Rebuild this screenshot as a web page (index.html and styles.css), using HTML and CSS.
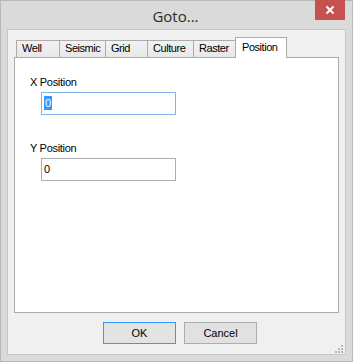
FILE: index.html
```html
<!DOCTYPE html>
<html>
<head>
<meta charset="utf-8">
<link rel="stylesheet" href="styles.css">
</head>
<body>
<div class="window">
  <div class="titlebar">
    <div class="title">Goto...</div>
    <div class="close">
      <svg width="10" height="10" viewBox="0 0 10 10"><path d="M1.5 1.5 L8.5 8.5 M8.5 1.5 L1.5 8.5" stroke="#ffffff" stroke-width="2"/></svg>
    </div>
  </div>
  <div class="client">
    <div class="tabs">
      <div class="tab tab-well">Well</div>
      <div class="tab tab-seismic">Seismic</div>
      <div class="tab tab-grid">Grid</div>
      <div class="tab tab-culture">Culture</div>
      <div class="tab tab-raster">Raster</div>
      <div class="tab tab-position active">Position</div>
    </div>
    <div class="panel">
      <div class="label">X Position</div>
      <div class="input focus"><span class="sel">0</span></div>
      <div class="label second">Y Position</div>
      <div class="input"><span>0</span></div>
    </div>
    <div class="buttons">
      <div class="btn default">OK</div>
      <div class="btn">Cancel</div>
    </div>
    <svg class="grip" width="10" height="10" viewBox="0 0 10 10">
      <rect x="7" y="1" width="2" height="2" fill="#b8b8b8"/>
      <rect x="4" y="4" width="2" height="2" fill="#b8b8b8"/>
      <rect x="7" y="4" width="2" height="2" fill="#b8b8b8"/>
      <rect x="1" y="7" width="2" height="2" fill="#b8b8b8"/>
      <rect x="4" y="7" width="2" height="2" fill="#b8b8b8"/>
      <rect x="7" y="7" width="2" height="2" fill="#b8b8b8"/>
    </svg>
  </div>
</div>
</body>
</html>
```
FILE: styles.css
```css
html, body {
  margin: 0;
  padding: 0;
  background: #ffffff;
}
.window {
  width: 353px;
  height: 362px;
  box-sizing: border-box;
  background: #dadada;
  border: 1px solid #b9b9b9;
  padding: 0 7px 7px 7px;
  display: flex;
  flex-direction: column;
  font-family: "Liberation Sans", Arial, sans-serif;
}
.titlebar {
  height: 29px;
  display: grid;
  grid-template-columns: 1fr auto 1fr;
  align-items: start;
}
.title {
  grid-column: 2;
  font-family: "Open Sans", "Noto Sans", sans-serif;
  font-size: 15px;
  line-height: 20px;
  padding-top: 5px;
  color: #2b2b2b;
  transform: translateX(-1px);
}
.close {
  grid-column: 3;
  justify-self: end;
  width: 30px;
  height: 20px;
  margin-top: -1px;
  background: #c75050;
  display: flex;
  align-items: center;
  justify-content: center;
}
.client {
  flex: 1;
  background: #f0f0f0;
  box-shadow: 0 0 0 1px #c6c6c6;
  display: flex;
  flex-direction: column;
  position: relative;
  padding: 7px 6px 0 6px;
  font-size: 11px;
  letter-spacing: -0.3px;
  color: #000;
}
.tabs {
  display: flex;
  align-items: flex-end;
  height: 20px;
  padding-left: 2px;
  position: relative;
  z-index: 1;
  letter-spacing: -0.45px;
}
.tab {
  box-sizing: border-box;
  height: 17px;
  line-height: 15px;
  padding: 0 0 0 5px;
  border: 1px solid #acacac;
  border-bottom: none;
  background: linear-gradient(#f2f2f2, #e8e8e8);
  margin-left: -1px;
  white-space: nowrap;
}
.tab:first-child {
  margin-left: 0;
}
.tab-well { width: 44px; }
.tab-seismic { width: 47px; }
.tab-grid { width: 43px; }
.tab-culture { width: 47px; }
.tab-raster { width: 43px; }
.tab-position { width: 52px; }
.tab.active {
  height: 21px;
  margin-bottom: -1px;
  background: #ffffff;
  padding: 2px 0 0 6px;
  line-height: 14px;
}
.panel {
  box-sizing: border-box;
  width: 325px;
  height: 256px;
  background: #ffffff;
  border: 1px solid #acacac;
  padding: 18px 0 0 15px;
  display: flex;
  flex-direction: column;
  align-items: flex-start;
}
.label {
  line-height: 13px;
}
.label.second {
  margin-top: 27px;
}
.input {
  box-sizing: border-box;
  width: 135px;
  height: 23px;
  margin: 3px 0 0 11px;
  border: 1px solid #abadb3;
  background: #ffffff;
  padding: 4px 0 0 2px;
  line-height: 13px;
}
.input.focus {
  border-color: #7eb4ea;
}
.sel {
  background: #3399ff;
  color: #ffffff;
  padding: 1px 1px;
}
.buttons {
  display: flex;
  gap: 8px;
  margin-top: 9px;
  padding-left: 89px;
}
.btn {
  box-sizing: border-box;
  width: 73px;
  height: 22px;
  line-height: 20px;
  text-align: center;
  border: 1px solid #adadad;
  background: #e1e1e1;
  letter-spacing: 0;
  font-size: 11px;
}
.btn.default {
  border-color: #3399ff;
  background: #e3e3e3;
}
.grip {
  position: absolute;
  right: 1px;
  bottom: 0px;
}
```
